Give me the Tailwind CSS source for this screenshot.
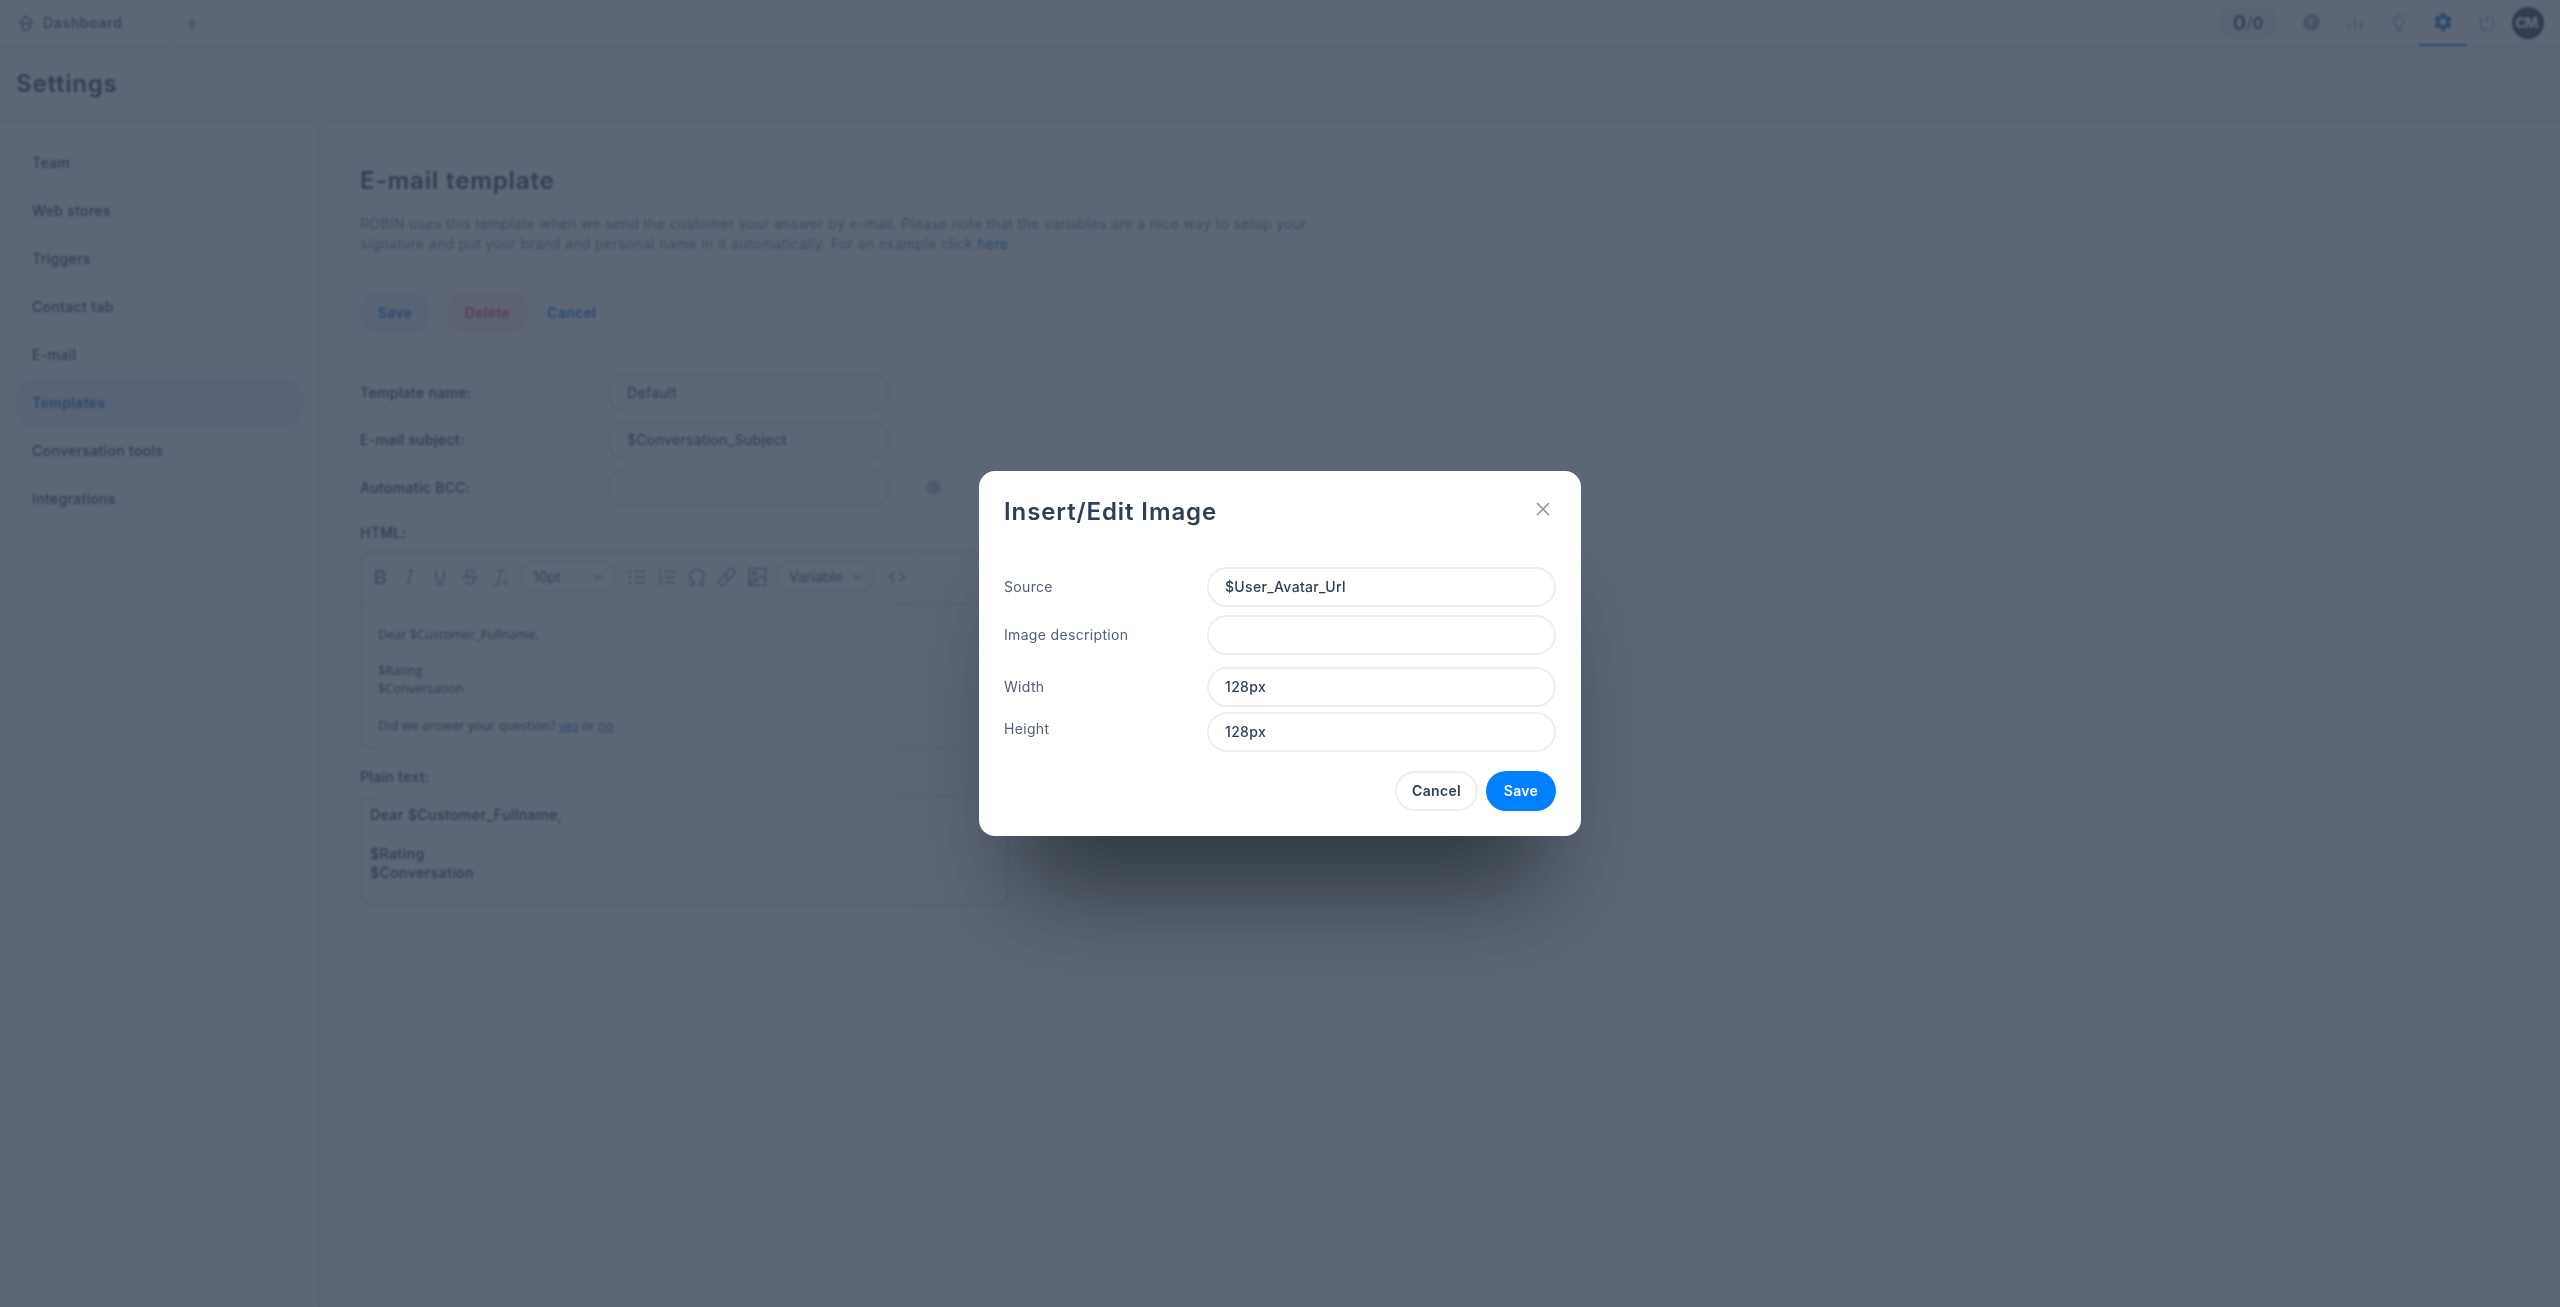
<!DOCTYPE html>
<html lang="en">
<head>
<meta charset="utf-8">
<title>Settings</title>
<script src="https://cdn.jsdelivr.net/npm/@tailwindcss/browser@4"></script>
</head>
<body class="m-0">
<div class="relative h-[1307px] w-[2560px] overflow-hidden bg-white font-['Inter',sans-serif] text-[14px] leading-5 tracking-[0.33px] text-[#2f3d55]">

  <header class="flex h-[46px] items-stretch border-b border-[#cfd3da]">
    <div class="flex w-[170px] items-center gap-2 border-r border-[#dde0e6] pl-[17px]">
      <svg class="h-[18px] w-[18px] text-[#5b6b85]" viewBox="0 0 18 18" fill="none" stroke="currentColor" stroke-width="1.6"><path d="M2 8.500 9 2l7 6.500"/><path d="M5 7.800V13a3 3 0 0 0 3 3h2a3 3 0 0 0 3-3V7.800"/><path d="M6.500 11.500a2.500 2.500 0 0 1 5 0"/></svg>
      <span class="font-semibold tracking-[0.6px] text-[#5b6b85]">Dashboard</span>
    </div>
    <div class="flex w-[44px] items-center justify-center text-[18px] text-[#7c8798]">+</div>
    <div class="ml-auto flex items-center">
      <div class="mr-[10px] flex h-8 w-[62px] items-center justify-center rounded-full bg-[#eff0f3] font-semibold tracking-normal text-[#2f3d55]">
        <span class="text-[20px]">0</span><span class="text-[18px] font-normal text-[#66728a]">/</span><span class="text-[16px]">0</span>
      </div>
      <div class="flex h-[45px] w-[44px] items-center justify-center">
        <div class="flex h-[17px] w-[17px] items-center justify-center rounded-full bg-[#99a3b3] text-[10px] font-bold text-white">?</div>
      </div>
      <div class="flex h-[45px] w-[44px] items-center justify-center">
        <svg class="h-[18px] w-[18px] text-[#a3acba]" viewBox="0 0 18 18" fill="none" stroke="currentColor" stroke-width="1.7"><path d="M3 16v-6M9 16V3M15 16V7"/></svg>
      </div>
      <div class="flex h-[45px] w-[44px] items-center justify-center">
        <svg class="h-[20px] w-[20px] text-[#98a2b3]" viewBox="0 0 20 20" fill="none" stroke="currentColor" stroke-width="1.5"><path d="M7.300 14c0-1.600-2-2.600-2-5.200a4.700 4.700 0 0 1 9.400 0c0 2.600-2 3.600-2 5.200z"/><path d="M8 15v1.400a2 2 0 0 0 4 0V15"/><path d="M3.500 2.800 4.800 4M16.500 2.800 15.200 4M7.500 1v1.500M12.500 1v1.500M10 .5V2"/></svg>
      </div>
      <div class="-mx-[2px] flex h-[46px] w-[48px] items-center justify-center border-b-2 border-[#0a6fd8] text-[#0a6fd8]">
        <svg class="h-[18px] w-[18px]" viewBox="2 2 20 20" fill="currentColor"><path d="M19.140 12.940c.04-.3.06-.61.06-.94 0-.32-.02-.64-.07-.94l2.030-1.580a.49.49 0 0 0 .12-.61l-1.920-3.320a.488.488 0 0 0-.59-.22l-2.390.96c-.5-.38-1.030-.7-1.620-.94l-.36-2.540a.484.484 0 0 0-.48-.41h-3.840c-.24 0-.43.17-.47.41l-.36 2.540c-.59.24-1.130.57-1.620.94l-2.390-.96c-.22-.08-.47 0-.59.22L2.740 8.870c-.12.21-.08.47.12.61l2.030 1.580c-.05.3-.09.63-.09.94s.02.64.07.94l-2.030 1.580a.49.49 0 0 0-.12.61l1.920 3.320c.12.22.37.29.59.22l2.390-.96c.5.38 1.030.7 1.620.94l.36 2.540c.05.24.24.41.48.41h3.840c.24 0 .44-.17.47-.41l.36-2.540c.59-.24 1.130-.56 1.620-.94l2.390.96c.22.08.47 0 .59-.22l1.920-3.320c.12-.22.07-.47-.12-.61l-2.010-1.580zM12 15.600c-1.980 0-3.600-1.620-3.600-3.600s1.620-3.600 3.600-3.600 3.600 1.620 3.600 3.600-1.620 3.600-3.600 3.600z"/></svg>
      </div>
      <div class="flex h-[45px] w-[44px] items-center justify-center">
        <svg class="h-[18px] w-[18px] text-[#98a2b3]" viewBox="0 0 18 18" fill="none" stroke="currentColor" stroke-width="1.5"><path d="M9 1v8"/><path d="M5 3.500a7 7 0 1 0 8 0"/></svg>
      </div>
      <div class="mr-4 ml-[3px] flex h-8 w-8 items-center justify-center rounded-full bg-[#1f2f47] text-[14px] leading-none font-extrabold tracking-[-1px] text-white">CM<span class="text-[#3d9bff]">.</span></div>
    </div>
  </header>

  <div class="flex h-[77px] items-center border-b border-[#cfd3da] pl-4">
    <h1 class="text-[24px] leading-8 font-semibold tracking-[0.8px] text-[#2f3d55]">Settings</h1>
  </div>

  <div class="flex h-[1184px]">
    <nav class="w-[320px] border-r border-[#cfd3da] px-4 pt-[16px] font-medium">
      <div class="flex h-12 items-center px-4">Team</div>
      <div class="flex h-12 items-center px-4">Web stores</div>
      <div class="flex h-12 items-center px-4">Triggers</div>
      <div class="flex h-12 items-center px-4">Contact tab</div>
      <div class="flex h-12 items-center px-4">E-mail</div>
      <div class="flex h-12 items-center rounded-2xl bg-[#e7f1fc] px-4 font-semibold text-[#0a6fd8]">Templates</div>
      <div class="flex h-12 items-center px-4">Conversation tools</div>
      <div class="flex h-12 items-center px-4">Integrations</div>
    </nav>

    <main class="w-[690px] pl-10 pt-[42px]">
      <h2 class="text-[24px] leading-8 font-semibold tracking-[0.9px]">E-mail template</h2>
      <p class="mt-[17px] w-[960px] text-[#7b8598]">ROBIN uses this template when we send the customer your answer by e-mail. Please note that the variables are a nice way to setup your<br>signature and put your brand and personal name in it automatically. For an example click <span class="text-[#0a6fd8]">here</span>.</p>

      <div class="mt-[39px] flex h-10 items-center font-semibold">
        <div class="flex h-10 w-[70px] items-center justify-center rounded-2xl bg-[#e7f1fc] text-[#0a6fd8]">Save</div>
        <div class="ml-[17px] flex h-10 w-[81px] items-center justify-center rounded-2xl bg-[#fbe9ee] text-[#e0436c]">Delete</div>
        <div class="ml-[19px] text-[#0a6fd8]">Cancel</div>
      </div>

      <div class="mt-10 flex flex-col gap-[8.500px]">
        <div class="flex h-[39px] items-center">
          <span class="w-[249px] font-medium">Template name:</span>
          <div class="flex h-[39px] w-[280px] items-center rounded-2xl border-2 border-[#dde0e6] px-4">Default</div>
        </div>
        <div class="flex h-[39px] items-center">
          <span class="w-[249px] font-medium">E-mail subject:</span>
          <div class="flex h-[39px] w-[280px] items-center rounded-2xl border-2 border-[#dde0e6] px-4">$Conversation_Subject</div>
        </div>
        <div class="flex h-[39px] items-center">
          <span class="w-[249px] font-medium">Automatic BCC:</span>
          <div class="h-[39px] w-[280px] rounded-2xl border-2 border-[#dde0e6]"></div>
          <div class="ml-[37px] h-[15px] w-[15px] rounded-full bg-[#bec4ce]"></div>
        </div>
      </div>

      <div class="mt-[16px] font-medium">HTML:</div>
      <div class="mt-2 h-[199px] w-[649px] rounded-xl border-2 border-[#dde0e6]">
        <div class="flex h-[51px] items-center border-b-2 border-[#dde0e6] pb-[2px] pl-[3px] tracking-normal text-[#7b8598]">
          <span class="flex w-[30px] justify-center">
            <svg class="h-6 w-6" viewBox="0 0 24 24" fill="#7b8598"><path d="M7.800 19c-.3 0-.5 0-.6-.2l-.2-.5V5.700c0-.2 0-.4.2-.5l.6-.2h5c1.500 0 2.700.3 3.500 1 .7.6 1.100 1.400 1.100 2.500a3 3 0 0 1-.6 1.900c-.4.6-1 1-1.600 1.200.4.100.9.3 1.300.6s.8.7 1 1.200c.4.4.5 1 .5 1.600 0 1.300-.4 2.300-1.300 3-.8.7-2.100 1-3.800 1H7.800zm5-8.300c.6 0 1.200-.1 1.600-.5.4-.3.6-.7.6-1.300 0-1.100-.8-1.700-2.300-1.700H9.300v3.500h3.400zm.5 6c.7 0 1.300-.1 1.700-.4.4-.4.6-.9.6-1.500s-.2-1-.7-1.400c-.4-.3-1-.4-2-.4H9.400v3.800h4z"/></svg>
          </span>
          <span class="flex w-[30px] justify-center">
            <svg class="h-6 w-6" viewBox="0 0 24 24" fill="none" stroke="#8d96a6" stroke-width="1.400"><path d="M10.500 5.500h5M8.500 18.500h5M13.300 5.500l-2.800 13"/></svg>
          </span>
          <span class="flex w-[30px] justify-center">
            <svg class="h-6 w-6" viewBox="0 0 24 24" fill="none" stroke="#7b8598" stroke-width="1.500" stroke-linecap="round"><path d="M8 5.500v6a4 4 0 0 0 8 0v-6M7.500 19h9"/></svg>
          </span>
          <span class="flex w-[30px] justify-center">
            <svg class="h-6 w-6" viewBox="0 0 24 24" fill="none" stroke="#7b8598" stroke-width="1.500" stroke-linecap="round"><path d="M16 7.500C15 5.800 13.700 5.200 12 5.200c-2.300 0-4 1.200-4 3.200 0 1.500 1 2.500 3 3.100M15.500 13c.5.600.8 1.300.8 2.200 0 2.200-1.900 3.600-4.300 3.600-2 0-3.600-.8-4.500-2.500M4.500 12h15"/></svg>
          </span>
          <span class="flex w-[30px] justify-center">
            <svg class="h-6 w-6" viewBox="0 0 24 24" fill="none" stroke="#8d96a6" stroke-width="1.400"><path d="M8.500 5.500h9M13.300 5.500l-2.800 12.500M5.500 19.500h7M15.500 16l3.500 3.500M19 16l-3.500 3.500"/></svg>
          </span>
          <div class="ml-1 flex h-[31px] w-[98px] items-center justify-between rounded-2xl border-2 border-[#dde0e6] pl-3 pr-3 text-[#525e74]">10pt
            <svg class="h-[10px] w-[10px]" viewBox="0 0 10 10" fill="none" stroke="#7b8598" stroke-width="1.400"><path d="M1 3l4 4 4-4"/></svg>
          </div>
          <span class="ml-[5px] flex w-[30px] justify-center">
            <svg class="h-6 w-6" viewBox="0 0 24 24" fill="none" stroke="#7b8598" stroke-width="1.500"><path d="M9.500 6.500H20M9.500 12H20M9.500 17.500H20"/><path stroke-width="2.600" stroke-linecap="round" d="M5 6.500h.1M5 12h.1M5 17.500h.1"/></svg>
          </span>
          <span class="flex w-[30px] justify-center">
            <svg class="h-6 w-6" viewBox="0 0 24 24" fill="none" stroke="#7b8598" stroke-width="1.500"><path d="M9.500 6.500H20M9.500 12H20M9.500 17.500H20"/><path stroke-width="1" d="M4.500 4.500l1-.5v4M4 10.800h2.200L4 13.200h2.400M4 16h2.200l-1 1.400h1v2H4"/></svg>
          </span>
          <span class="flex w-[30px] justify-center">
            <svg class="h-6 w-6" viewBox="0 0 24 24" fill="none" stroke="#7b8598" stroke-width="1.500"><path d="M4 19.500h5v-2.200c-2.500-1.200-4-3.500-4-6.300C5 7.200 8 4.500 12 4.500s7 2.700 7 6.500c0 2.800-1.500 5.100-4 6.300v2.200h5"/></svg>
          </span>
          <span class="flex w-[30px] justify-center">
            <svg class="h-6 w-6" viewBox="0 0 24 24" fill="none" stroke="#7b8598" stroke-width="1.400"><path d="M10.500 8.500l3.500-3.800a3.300 3.300 0 0 1 4.900 4.500l-3.400 3.800a3.300 3.300 0 0 1-4.800 0"/><path d="M13.500 15.500L10 19.300a3.300 3.300 0 0 1-4.900-4.500l3.400-3.800a3.300 3.300 0 0 1 4.800 0"/></svg>
          </span>
          <span class="flex w-[30px] justify-center">
            <svg class="h-6 w-6" viewBox="0 0 24 24" fill="none" stroke="#7b8598" stroke-width="1.500"><rect x="4" y="3.500" width="16.500" height="17"/><circle cx="9.500" cy="8.500" r="1.700"/><path d="M4 17l5-4 3 2.500 4-5 4.500 4.500M4 20.500l8-5"/></svg>
          </span>
          <div class="ml-[3px] flex h-[31px] w-[100px] items-center justify-between rounded-2xl border-2 border-[#dde0e6] pl-3 pr-[10px] text-[#525e74]">Variable
            <svg class="h-[10px] w-[10px]" viewBox="0 0 10 10" fill="none" stroke="#7b8598" stroke-width="1.400"><path d="M1 3l4 4 4-4"/></svg>
          </div>
          <span class="ml-[7px] flex w-[30px] justify-center">
            <svg class="h-6 w-6" viewBox="0 0 24 24" fill="none" stroke="#7b8598" stroke-width="1.500"><path d="M9.500 7.500 4.500 12l5 4.500M14.500 7.500l5 4.500-5 4.500"/></svg>
          </span>
        </div>
        <div class="pl-4 pt-[21px] font-['Open_Sans',sans-serif] text-[12.700px] leading-[18px] tracking-normal">
          <div>Dear $Customer_Fullname,</div>
          <div class="mt-[18px]">$Rating</div>
          <div>$Conversation</div>
          <div class="mt-[19px]">Did we answer your question? <span class="text-[#0a6fd8] underline">yes</span> or <span class="text-[#0a6fd8] underline">no</span></div>
        </div>
      </div>

      <div class="mt-[17px] font-medium">Plain text:</div>
      <div class="mt-[9px] h-[110px] w-[649px] rounded-xl border-2 border-[#dde0e6] px-2 pt-[6.500px] leading-[19.500px] font-medium tracking-[0.45px]">
        <div>Dear $Customer_Fullname,</div>
        <div class="mt-[19.500px]">$Rating</div>
        <div>$Conversation</div>
      </div>
    </main>
  </div>

  <div class="absolute inset-0 flex items-center justify-center bg-[#344054]/80 backdrop-blur-[1px]">
    <div class="relative h-[365px] w-[602px] rounded-2xl bg-white px-[25px] pt-[25px] shadow-[0_90px_100px_-40px_rgba(20,30,30,0.65)]">
      <h3 class="text-[24px] leading-8 font-semibold tracking-[0.9px]">Insert/Edit Image</h3>
      <svg class="absolute top-[31px] right-[31px] h-[14px] w-[14px] text-[#8d96a6]" viewBox="0 0 14 14" fill="none" stroke="currentColor" stroke-width="1.600"><path d="M1 1l12 12M13 1L1 13"/></svg>

      <div class="mt-[39px] flex items-center">
        <span class="w-[203px] text-[#525e74]">Source</span>
        <div class="flex h-10 w-[349px] items-center rounded-full border-2 border-[#eeeeef] px-4 font-medium">$User_Avatar_Url</div>
      </div>
      <div class="mt-2 flex items-center">
        <span class="w-[203px] text-[#525e74]">Image description</span>
        <div class="h-10 w-[349px] rounded-full border-2 border-[#eeeeef]"></div>
      </div>
      <div class="mt-3 flex items-center">
        <span class="w-[203px] text-[#525e74]">Width</span>
        <div class="flex h-10 w-[349px] items-center rounded-full border-2 border-[#eeeeef] px-4 font-medium">128px</div>
      </div>
      <div class="mt-[5px] flex items-start">
        <span class="mt-[7px] w-[203px] text-[#525e74]">Height</span>
        <div class="flex h-10 w-[349px] items-center rounded-full border-2 border-[#eeeeef] px-4 font-medium">128px</div>
      </div>
      <div class="mt-[19px] flex justify-end gap-2 font-semibold">
        <div class="flex h-10 w-[83px] items-center justify-center rounded-full border-2 border-[#eeeeef]">Cancel</div>
        <div class="flex h-10 w-[70px] items-center justify-center rounded-full bg-[#0080ff] text-white">Save</div>
      </div>
    </div>
  </div>
</div>
</body>
</html>
